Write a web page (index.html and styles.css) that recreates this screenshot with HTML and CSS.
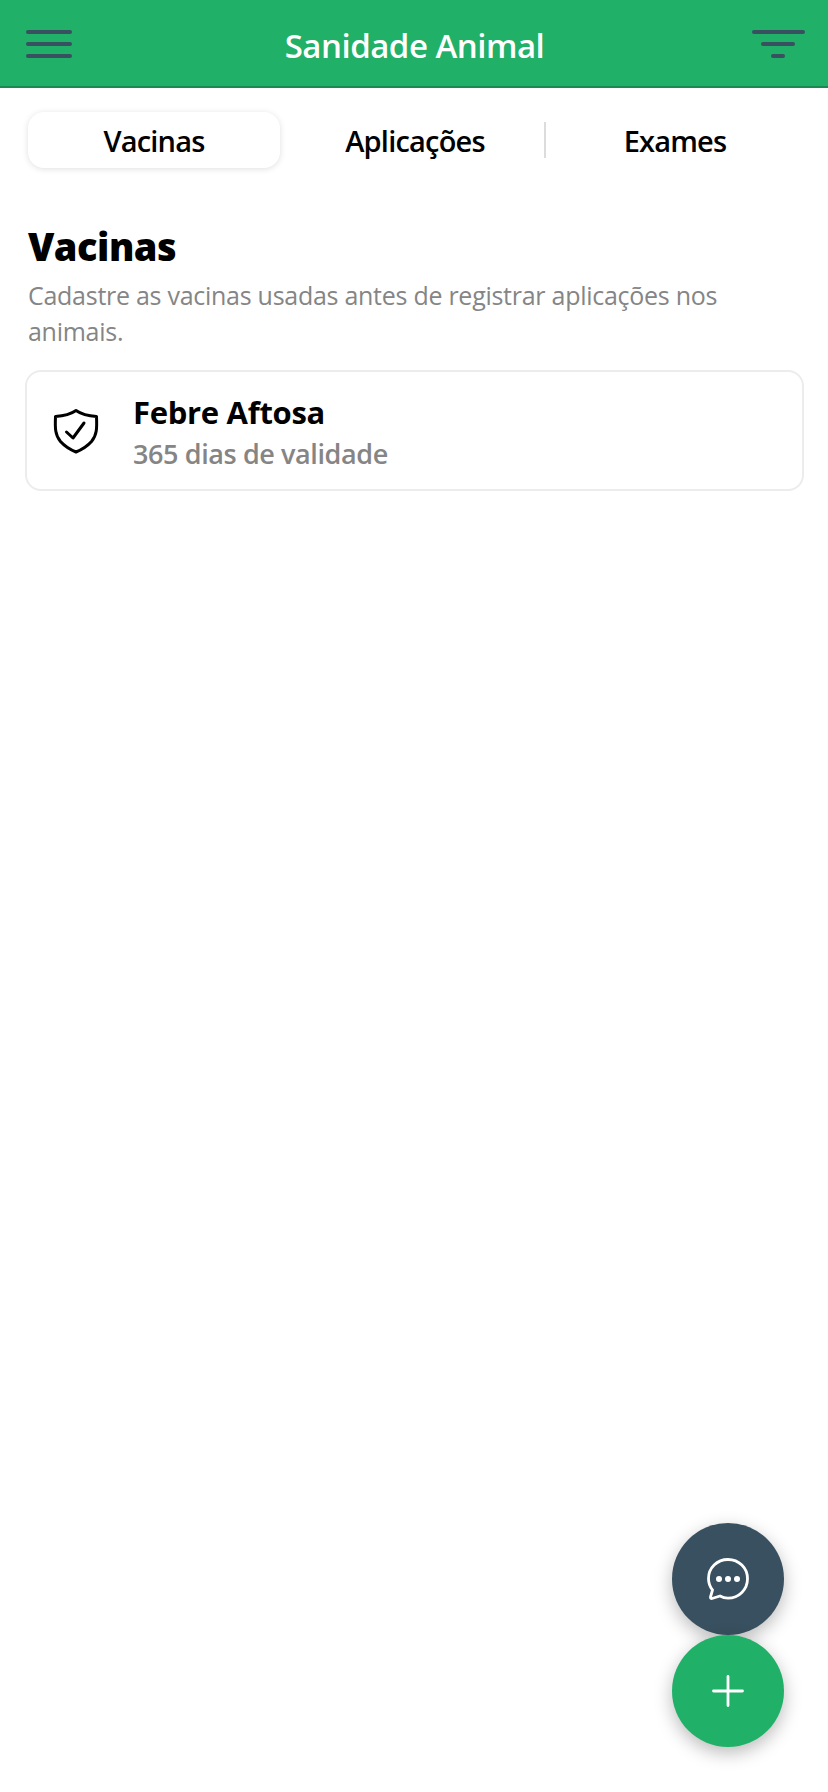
FILE: index.html
```html
<!DOCTYPE html>
<html lang="pt-BR">
<head>
  <meta charset="UTF-8" />
  <meta name="viewport" content="width=device-width, initial-scale=1.0" />
  <title>Sanidade Animal</title>
  <link rel="stylesheet" href="styles.css">
</head>
<body>
  <header class="topbar">
    <button class="icon-btn menu-btn" aria-label="Menu">
      <span></span><span></span><span></span>
    </button>
    <h1>Sanidade Animal</h1>
    <button class="icon-btn filter-btn" aria-label="Filtros">
      <span></span><span></span><span></span>
    </button>
  </header>

  <nav class="tabs">
    <button class="tab active">Vacinas</button>
    <button class="tab">Aplicações</button>
    <i class="tab-divider"></i>
    <button class="tab">Exames</button>
  </nav>

  <main>
    <h2>Vacinas</h2>
    <p class="hint">Cadastre as vacinas usadas antes de registrar aplicações nos animais.</p>

    <div class="card">
      <svg class="shield" viewBox="0 0 46 46" fill="none" stroke="#000" stroke-width="3" stroke-linecap="round" stroke-linejoin="round">
        <path d="M23 2.5 C28 6 35 8 43.5 8.5 C44 20 44 27 38.5 33.5 C34.5 38 29 41.5 23 44 C17 41.5 11.5 38 7.5 33.5 C2 27 2 20 2.5 8.5 C11 8 18 6 23 2.5 Z" />
        <path d="M13.5 24 L20 30 L31 15" />
      </svg>
      <div class="card-text">
        <div class="card-title">Febre Aftosa</div>
        <div class="card-sub">365 dias de validade</div>
      </div>
    </div>
  </main>

  <div class="fabs">
    <button class="fab fab-chat" aria-label="Chat">
      <svg width="46" height="46" viewBox="0 0 46 46" fill="none" stroke="#fff" stroke-width="2.8" stroke-linecap="round" stroke-linejoin="round">
        <path d="M23 3.5 C12 3.5 3.5 12 3.5 22.5 C3.5 27 5 31 7.5 34 L5.5 41 C5.3 42.2 6 42.8 7 42.5 L15 40 C17.5 41.5 20.3 42.2 23 42.2 C34 42.2 42.5 33.5 42.5 22.8 C42.5 12 34 3.5 23 3.5 Z" />
        <circle cx="14" cy="23" r="3" fill="#fff" stroke="none" />
        <circle cx="23" cy="23" r="3" fill="#fff" stroke="none" />
        <circle cx="32" cy="23" r="3" fill="#fff" stroke="none" />
      </svg>
    </button>
    <button class="fab fab-add" aria-label="Adicionar">
      <svg width="32" height="32" viewBox="0 0 32 32" fill="none" stroke="#fff" stroke-width="2.8" stroke-linecap="round">
        <path d="M16 1.5 V30.5 M1.5 16 H30.5" />
      </svg>
    </button>
  </div>
</body>
</html>
```

FILE: styles.css
```css
:root {
  --green: #20b068;
  --green-dark: #1a8a52;
  --slate: #38505f;
  --gray: #858585;
}

* {
  box-sizing: border-box;
}

body {
  margin: 0;
  height: 1792px;
  overflow: hidden;
  position: relative;
  background: #fff;
  color: #000;
  font-family: "Open Sans", "Noto Sans", sans-serif;
}

button {
  font-family: inherit;
  border: none;
  background: none;
  padding: 0;
  color: inherit;
}

.topbar {
  height: 88px;
  background: var(--green);
  border-bottom: 2px solid var(--green-dark);
  display: flex;
  align-items: center;
  justify-content: space-between;
  padding: 0 23px 0 26px;
}
.topbar h1 {
  margin: 4px 0 0 5px;
  font-size: 33px;
  font-weight: 600;
  color: #fff;
  letter-spacing: -0.5px;
}
.icon-btn {
  display: flex;
  flex-direction: column;
  gap: 8px;
  margin-top: 1px;
}
.icon-btn span {
  display: block;
  height: 4px;
  border-radius: 2px;
  background: var(--slate);
}
.menu-btn {
  width: 46px;
}
.filter-btn {
  width: 53px;
  align-items: center;
}
.filter-btn span:nth-child(1) { width: 53px; }
.filter-btn span:nth-child(2) { width: 34px; }
.filter-btn span:nth-child(3) { width: 14px; }

.tabs {
  display: flex;
  align-items: center;
  padding: 24px 24px 0 28px;
}
.tab {
  flex: 1;
  height: 56px;
  font-size: 29px;
  font-weight: 550;
  letter-spacing: -0.8px;
  border-radius: 16px;
}
.tab.active {
  flex: none;
  width: 252px;
  margin-right: 6px;
  box-shadow: 0 1px 6px rgba(0, 0, 0, 0.13);
}
.tab-divider {
  width: 2px;
  height: 36px;
  background: #dcdcdc;
}

main {
  padding: 0 24px 0 25px;
}
h2 {
  margin: 52px 0 0 3px;
  font-size: 38px;
  line-height: 52px;
  font-weight: 800;
  letter-spacing: -0.5px;
}
.hint {
  margin: 5px 0 0 3px;
  font-size: 25px;
  line-height: 36px;
  color: var(--gray);
  letter-spacing: -0.27px;
}
.card {
  margin-top: 21px;
  height: 121px;
  border: 2px solid #ececec;
  border-radius: 16px;
  display: flex;
  align-items: center;
  gap: 34px;
  padding: 0 0 0 26px;
}
.shield {
  width: 46px;
  height: 46px;
  flex: none;
}
.card-text {
  padding-top: 4px;
}
.card-title {
  font-size: 31px;
  line-height: 42px;
  font-weight: 700;
  letter-spacing: -0.3px;
}
.card-sub {
  font-size: 27px;
  line-height: 42px;
  font-weight: 600;
  color: var(--gray);
  letter-spacing: -0.4px;
}

.fabs {
  position: absolute;
  right: 44px;
  bottom: 45px;
  display: flex;
  flex-direction: column;
}
.fab {
  width: 112px;
  height: 112px;
  border-radius: 50%;
  display: flex;
  align-items: center;
  justify-content: center;
  box-shadow: 0 6px 18px rgba(0, 0, 0, 0.27);
}
.fab-chat {
  background: var(--slate);
}
.fab-add {
  background: var(--green);
}
```
